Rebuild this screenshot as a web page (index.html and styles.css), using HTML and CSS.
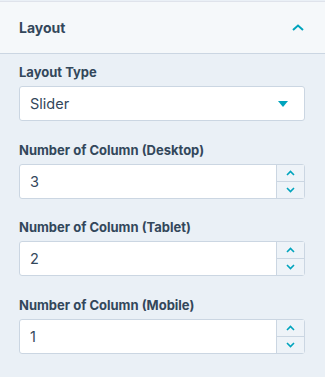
FILE: index.html
```html
<!DOCTYPE html>
<html lang="en">
<head>
  <meta charset="UTF-8">
  <meta name="viewport" content="width=device-width, initial-scale=1.0">
  <title>Layout</title>
  <link rel="stylesheet" href="styles.css">
</head>
<body>

  <div class="panel">
    <div class="panel-header">
      <span class="panel-title">Layout</span>
      <svg class="chevron" width="12" height="7" viewBox="0 0 12 7">
        <path d="M1 6 L6 1.5 L11 6" fill="none" stroke="#00a4bd" stroke-width="2"/>
      </svg>
    </div>

    <div class="panel-body">
      <div class="field">
        <label>Layout Type</label>
        <div class="select">
          <span>Slider</span>
          <svg width="10" height="6" viewBox="0 0 10 6"><path d="M0 0 H10 L5 6 Z" fill="#00a4bd"/></svg>
        </div>
      </div>

      <div class="field">
        <label>Number of Column (Desktop)</label>
        <div class="number">
          <span class="value">3</span>
          <div class="spinner">
            <button class="step"><svg width="9" height="6" viewBox="0 0 9 6"><path d="M1 5 L4.5 1.5 L8 5" fill="none" stroke="#00a4bd" stroke-width="1.6"/></svg></button>
            <button class="step"><svg width="9" height="6" viewBox="0 0 9 6"><path d="M1 1 L4.5 4.5 L8 1" fill="none" stroke="#00a4bd" stroke-width="1.6"/></svg></button>
          </div>
        </div>
      </div>

      <div class="field">
        <label>Number of Column (Tablet)</label>
        <div class="number">
          <span class="value">2</span>
          <div class="spinner">
            <button class="step"><svg width="9" height="6" viewBox="0 0 9 6"><path d="M1 5 L4.5 1.5 L8 5" fill="none" stroke="#00a4bd" stroke-width="1.6"/></svg></button>
            <button class="step"><svg width="9" height="6" viewBox="0 0 9 6"><path d="M1 1 L4.5 4.5 L8 1" fill="none" stroke="#00a4bd" stroke-width="1.6"/></svg></button>
          </div>
        </div>
      </div>

      <div class="field">
        <label>Number of Column (Mobile)</label>
        <div class="number">
          <span class="value">1</span>
          <div class="spinner">
            <button class="step"><svg width="9" height="6" viewBox="0 0 9 6"><path d="M1 5 L4.5 1.5 L8 5" fill="none" stroke="#00a4bd" stroke-width="1.6"/></svg></button>
            <button class="step"><svg width="9" height="6" viewBox="0 0 9 6"><path d="M1 1 L4.5 4.5 L8 1" fill="none" stroke="#00a4bd" stroke-width="1.6"/></svg></button>
          </div>
        </div>
      </div>
    </div>
  </div>

</body>
</html>
```

FILE: styles.css
```css
body {
  margin: 0;
  background-color: #eaf0f6;
  font-family: Inter, "Noto Sans", sans-serif;
  color: #33475b;
}
.panel {
  padding-top: 1px;
}
.panel-header {
  height: 51px;
  display: flex;
  align-items: center;
  justify-content: space-between;
  padding: 0 21px 0 19px;
  background-color: #f5f8fa;
  border-top: 1px solid #dfe3eb;
  border-bottom: 1px solid #cbd6e2;
}
.panel-title {
  font-size: 14px;
  font-weight: 700;
}
.chevron {
  display: block;
}
.panel-body {
  padding: 10px 20px 0 19px;
}
.field {
  margin-bottom: 20.7px;
}
.field label {
  display: block;
  font-size: 13px;
  font-weight: 700;
  line-height: 16px;
  margin-bottom: 6px;
}
.select, .number {
  box-sizing: border-box;
  height: 35px;
  background-color: #fff;
  border: 1px solid #cbd6e2;
  border-radius: 3px;
  display: flex;
  align-items: center;
  font-size: 14.5px;
}
.select {
  justify-content: space-between;
  padding: 0 16px 0 10px;
}
.value {
  flex: 1;
  padding-left: 10px;
}
.spinner {
  width: 27px;
  height: 100%;
  display: flex;
  flex-direction: column;
  border-left: 1px solid #cbd6e2;
  background-color: #eef3f8;
}
.step {
  flex: 1;
  display: flex;
  align-items: center;
  justify-content: center;
  padding: 0;
  border: none;
  background: none;
}
.step + .step {
  border-top: 1px solid #cbd6e2;
}
.step svg {
  display: block;
}
```
